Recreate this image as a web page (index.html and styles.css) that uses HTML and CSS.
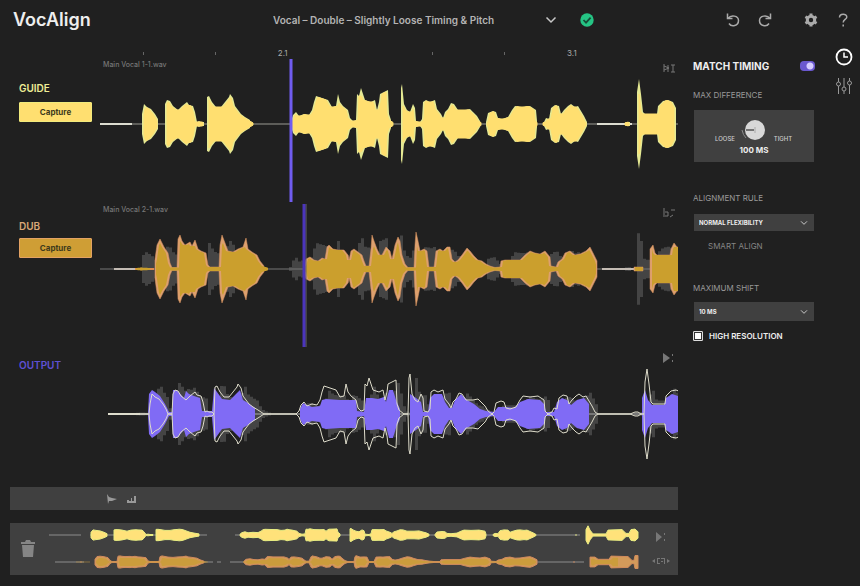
FILE: index.html
```html
<!DOCTYPE html>
<html lang="en">
<head>
<meta charset="utf-8">
<title>VocAlign</title>
<link rel="stylesheet" href="styles.css">
</head>
<body>
<header class="topbar">
  <h1 class="brand">VocAlign</h1>
  <div class="preset">
    <select class="preset-select" aria-label="Preset"><option>Vocal – Double – Slightly Loose Timing &amp; Pitch</option></select>
    <svg class="chevron" viewBox="0 0 12 8" width="12" height="8"><path d="M1.5 1.5 6 6l4.500-4.500"/></svg>
  </div>
  <svg class="status" viewBox="0 0 14 14" width="14" height="14"><circle cx="7" cy="7" r="6.700" fill="#25c484"/><path d="m3.500 7 2.500 2.600 4.600-5" fill="none" stroke="#174c38" stroke-width="1.800"/></svg>
  <nav class="tools">
    <button class="tool" aria-label="Undo"><svg viewBox="0 0 16 16"><path d="M2.500 1.500v5H7.500M3 6.500C6 2.500 13.500 3.500 13.500 8.500c0 5.500-7 7-9.500 3"/></svg></button>
    <button class="tool" aria-label="Redo"><svg viewBox="0 0 16 16"><path d="M13.500 1.500v5H8.500M13 6.500C10 2.500 2.500 3.500 2.500 8.500c0 5.500 7 7 9.500 3"/></svg></button>
    <button class="tool tool-gear" aria-label="Settings"><svg viewBox="0 0 16 16"><circle cx="8" cy="8" r="3.700" stroke-width="3"/><path stroke-width="3" d="M8 1.500v2M8 12.500v2M2.400 4.800l1.800 1M11.800 10.200l1.800 1M2.400 11.200l1.800-1M11.800 5.800l1.800-1"/></svg></button>
    <button class="tool" aria-label="Help"><svg viewBox="0 0 16 16"><path d="M4.500 5.500C4.500 1 11.800 1.200 11.800 5c0 2.500-3.600 2.500-3.600 5.500M8.200 12.500v2"/></svg></button>
  </nav>
</header>

<div class="app">
  <main class="workspace">
    <div class="ruler">
      <i class="tick"></i><i class="tick"></i><span>2.1</span><span></span><i class="tick"></i><i class="tick"></i><span>3.1</span>
    </div>

    <section class="track">
      <div class="track-head guide"><h2>GUIDE</h2><button class="capture">Capture</button></div>
      <div class="lane">
        <span class="clip">Main Vocal 1-1.wav</span>
        <svg class="wave" id="guide" viewBox="100 -66 578 145" preserveAspectRatio="none"></svg>
        <svg class="mark" viewBox="0 0 12 10"><path d="M1 1v8M1 3l5 2-5 2M5 2v7M8 2h4M10 2v7M8 9h4"/></svg>
      </div>
    </section>
    <section class="track">
      <div class="track-head dub"><h2>DUB</h2><button class="capture">Capture</button></div>
      <div class="lane">
        <span class="clip">Main Vocal 2-1.wav</span>
        <svg class="wave" id="dub" viewBox="100 -66 578 145" preserveAspectRatio="none"></svg>
        <svg class="mark" viewBox="0 0 12 10"><path d="M1 0v9M2 4h3v4H2M8 2h4M7 9l3-2"/></svg>
      </div>
    </section>
    <section class="track track-last">
      <div class="track-head output"><h2>OUTPUT</h2></div>
      <div class="lane">
        <svg class="wave" id="output" viewBox="100 -66 578 145" preserveAspectRatio="none"></svg>
        <svg class="mark" viewBox="0 0 12 10"><path class="solid" d="M0 0l7 5-7 5z"/><path d="M9.500 1v2M9.500 7v2"/></svg>
      </div>
    </section>

    <div class="strip">
      <svg viewBox="0 0 10 10" width="10" height="10"><path d="M0 0l2 3 3 1 5 1-5 2-3 0-1 3z"/></svg>
      <svg viewBox="0 0 10 10" width="10" height="10"><path d="M0 9V6h2v1h2V4h1v3h2V2h2v7z"/></svg>
    </div>

    <section class="overview">
      <button class="trash" aria-label="Delete"><svg viewBox="0 0 16 20" width="16" height="20"><path d="M1 3h4l1-2h4l1 2h4v2H1zM2 6h12l-1 12H3z"/></svg></button>
      <svg class="mini" id="mini" viewBox="49 0 591 52" preserveAspectRatio="none"></svg>
      <div class="mini-marks">
        <svg viewBox="0 0 18 10" width="18" height="10"><path d="M4 0l6 5-6 5zM12 1h1v2h-1zM12 7h1v2h-1z"/></svg>
        <svg viewBox="0 0 18 10" width="18" height="10"><path d="M3 3v4L0 5zM15 3v4l3-2zM5 2h3v1H6v4h2v1H5zM9 2h4v6h-1V3H9zM9 5h2v1H9z"/></svg>
      </div>
    </section>
  </main>

  <aside class="panel">
    <div class="panel-title"><label for="match">MATCH TIMING</label><input type="checkbox" class="toggle" id="match" checked></div>
    <label class="caption" for="knob">MAX DIFFERENCE</label>
    <div class="knob-box">
      <span class="end">LOOSE</span>
      <button class="knob" id="knob" aria-label="Max difference"><svg viewBox="0 0 28 22" width="28" height="22"><path d="M2 11q1 5 4 8" fill="none" stroke="#8a8a8a"/><circle cx="15" cy="11" r="10" fill="#d8d8d8"/><path d="M6 11h8" stroke="#555" stroke-width="1.500"/><path d="M15 8v6" stroke="#aaa"/></svg></button>
      <span class="end">TIGHT</span>
      <output class="value" for="knob">100 MS</output>
    </div>
    <label class="caption caption-rule" for="rule">ALIGNMENT RULE</label>
    <div class="drop drop-rule"><select id="rule"><option>NORMAL FLEXIBILITY</option></select><svg class="chevron" viewBox="0 0 12 8" width="8" height="6"><path d="M1.500 1.500 6 6l4.500-4.500"/></svg></div>
    <button class="smart">SMART ALIGN</button>
    <label class="caption caption-shift" for="shift">MAXIMUM SHIFT</label>
    <div class="drop drop-shift"><select id="shift"><option>10 MS</option></select><svg class="chevron" viewBox="0 0 12 8" width="8" height="6"><path d="M1.500 1.500 6 6l4.500-4.500"/></svg></div>
    <label class="check"><input type="checkbox" checked>HIGH RESOLUTION</label>
  </aside>

  <nav class="rail">
    <button class="rail-btn active" aria-label="Timing"><svg viewBox="0 0 18 18"><circle cx="9" cy="9" r="7.500" stroke-width="1.800"/><path d="M9 4.500V9h4" stroke-width="1.500"/></svg></button>
    <button class="rail-btn" aria-label="Pitch"><svg viewBox="0 0 18 18"><path d="M3.500 1v4M3.500 9v8M9 1v9M9 14v3M14.500 1v3M14.500 8v9"/><circle cx="3.500" cy="7" r="2"/><circle cx="9" cy="12" r="2"/><circle cx="14.500" cy="6" r="2"/></svg></button>
  </nav>
</div>
<script src="waves.js"></script>
</body>
</html>
```
FILE: styles.css
```css
* { box-sizing: border-box; }
body {
  margin: 0;
  min-height: 100vh;
  background: #202020;
  color: #eee;
  font-family: Inter, "Liberation Sans", sans-serif;
}
h1, h2 { margin: 0; }
button, select {
  font: inherit;
  color: inherit;
  border: 0;
  padding: 0;
  background: none;
  appearance: none;
}
svg { display: block; }

.topbar {
  display: flex;
  align-items: center;
  height: 40px;
  padding: 0 9px 0 13px;
}
.brand { font-size: 18px; font-weight: 600; line-height: 24px; width: 260px; }
.preset { display: flex; align-items: center; width: 284px; color: #b4b4b4; }
.preset-select { flex: 1; font-size: 10px; font-weight: 600; line-height: 16px; }
.chevron { flex: none; fill: none; stroke: #c8c8c8; stroke-width: 1.5; pointer-events: none; }
.status { margin-left: 23px; }
.tools { display: flex; align-items: center; gap: 16px; margin-left: auto; }
.tool svg { width: 16px; height: 16px; fill: none; stroke: #aaa; stroke-width: 1.5; }
.tool-gear { margin-left: 14px; }

.app { display: flex; align-items: flex-start; }
.workspace { flex: 1; min-width: 0; padding-left: 10px; }

.ruler {
  display: grid;
  grid-template-columns: repeat(7, 1fr);
  justify-items: center;
  align-items: center;
  height: 18px;
  padding: 7px 65px 0 97px;
  font-size: 8px;
  line-height: 12px;
  color: #aaa;
}
.ruler span { padding-right: 10px; }
.tick { width: 1px; height: 3px; background: #666; }

.track { display: flex; height: 145px; }
.track-last { height: 139px; }
.track-head { flex: none; width: 90px; padding: 23px 8px 0 9px; }
.track-head.dub { padding-top: 16px; }
.track-head.output { padding-top: 10px; }
.track-head h2 { font-size: 10px; line-height: 14px; font-weight: 600; }
.guide h2 { color: #eeee96; }
.dub h2 { color: #d9a777; }
.output h2 { color: #5f50d4; }
.capture {
  display: block;
  width: 100%;
  height: 20px;
  margin-top: 7px;
  border-radius: 1px;
  font-size: 8px;
  font-weight: 700;
  color: #403a1c;
  background: #ffdf70;
  border: 1px solid #f1ea7c;
}
.dub .capture { margin-top: 5px; background: #cf9e35; border-color: #e3a263; }
.lane { position: relative; flex: 1; min-width: 0; }
.wave { width: 100%; height: 145px; }
.clip { position: absolute; left: 3px; top: 2px; font-size: 7px; line-height: 10px; font-weight: 500; color: #777; }
.mark { position: absolute; right: 3px; top: 5px; width: 12px; height: 10px; fill: none; stroke: #777; }
.mark .solid { fill: #777; stroke: none; }

.strip {
  display: flex;
  align-items: center;
  gap: 10px;
  height: 23px;
  padding-left: 97px;
  background: #404040;
  fill: #999;
}
.overview {
  display: flex;
  align-items: center;
  height: 52px;
  margin: 13px 0 11px;
  padding: 0 8px 0 10px;
  background: #404040;
}
.trash { width: 29px; fill: #858585; }
.mini { flex: 1; min-width: 0; height: 52px; }
.mini-marks { display: grid; gap: 14px; margin-left: 12px; fill: #777; }

.panel { width: 137px; flex: none; padding: 18px 0 0 15px; }
.panel-title {
  display: flex;
  align-items: center;
  justify-content: space-between;
  height: 16px;
  font-size: 10px;
  font-weight: 700;
}
.toggle {
  appearance: none;
  width: 15px;
  height: 10px;
  margin: 0;
  border-radius: 4px;
  background: radial-gradient(circle at 10px 5px, #d5ccff 3px, #6a58cf 4px);
}
.caption { display: block; margin-top: 15px; font-size: 8px; line-height: 12px; color: #999; }
.knob-box {
  display: grid;
  grid-template-columns: 1fr auto 1fr;
  align-items: end;
  justify-items: center;
  column-gap: 4px;
  height: 52px;
  margin: 9px 1px 0;
  padding: 9px 20px 7px;
  background: #404040;
}
.knob { align-self: start; }
.end { font-size: 6px; line-height: 8px; font-weight: 500; color: #ccc; }
.value { grid-column: 1 / -1; font-size: 8px; line-height: 10px; font-weight: 700; }
.caption-rule { margin-top: 30px; }
.drop {
  display: flex;
  align-items: center;
  margin: 10px 1px 0;
  padding: 0 6px 0 5px;
  background: #404040;
}
.drop select { flex: 1; min-width: 0; font-size: 6px; font-weight: 700; }
.drop-rule { height: 17px; }
.drop-shift { height: 19px; margin-top: 8px; }
.smart { display: block; margin: 9px 0 0 15px; font-size: 8px; line-height: 12px; color: #858585; }
.caption-shift { margin-top: 30px; }
.check { display: flex; align-items: center; gap: 6px; margin-top: 9px; font-size: 8px; line-height: 12px; font-weight: 600; }
.check input {
  appearance: none;
  width: 10px;
  height: 10px;
  margin: 0;
  border: 1px solid #ddd;
  border-radius: 1px;
  background: #fff;
  box-shadow: inset 0 0 0 1px #333;
}

.rail { width: 45px; flex: none; display: grid; gap: 11px; justify-items: center; padding: 8px 0 0 13px; }
.rail-btn svg { width: 18px; height: 18px; fill: none; stroke: #999; }
.rail-btn.active svg { stroke: #fff; }
```
FILE: waves.js
```js
// Amplitude envelopes: position and half-height pairs.
const guide = [100,1,132,1,133,.5,141,.5,142,10,144,20,147,17,151,15,155,10,158,5,160,1,164,1,165,20,167,24,170,23,173,18,178,14,182,18,187,22,189,19,193,18,195,12,197,2,199,3,201,2,204,2,206,1,207,27,209,28,212,22,216,17,221,17,225,22,229,27,230,30,233,26,235,18,238,14,241,10,245,7,250,4,256,.5,288,.5,291,3,293,9,296,12,299,8,304,10,309,9,312,14,314,22,316,28,322,26,328,24,332,17,336,18,338,30,340,22,343,18,348,14,350,6,353,3,356,4,357,30,359,28,361,36,363,30,365,24,371,22,375,24,377,14,379,22,380,30,384,32,388,34,389,10,391,4,396,1,400,1,401,36,402,40,404,20,407,14,410,12,413,20,415,16,416,3,420,2,422,5,423,22,426,24,430,22,435,24,437,15,441,10,443,6,445,12,448,15,451,21,454,20,458,14,465,14,470,15,473,12,477,8,480,3,484,1,486,2,488,11,493,13,496,12,498,6,502,5,508,7,512,14,515,18,522,17,530,18,536,14,537,3,540,1,544,2,546,6,549,5,551,16,555,19,559,18,561,10,564,14,568,18,571,20,575,17,578,18,581,13,584,8,587,2,590,.5,597,1,622,1,627,2,630,2,633,.5,636,.5,637,32,639,45,641,30,643,12,645,10,657,10,658,18,663,23,668,24,673,22,676,16,677,1];
const dub = [114,1,133,1,141,1.5,153,1,155,10,157,24,160,30,164,22,168,16,170,6,172,1.5,177,1.5,178,30,180,34,182,28,185,24,190,27,192,23,195,29,198,20,201,18,206,16,208,4,210,2,219,2,220,24,222,34,225,26,228,18,233,17,238,20,243,22,246,31,248,20,252,17,257,14,260,8,264,3,271,1,276,.5,300,.5,304,3,306,10,310,12,314,9,318,8,322,11,325,10,327,22,329,24,333,20,338,19,344,19,348,14,349,9,351,18,354,20,358,17,362,14,364,8,366,3,369,3,371,20,372,34,374,28,377,20,380,14,382,14,386,22,390,18,392,10,395,24,398,32,400,28,402,14,405,5,408,1.5,414,1.5,415,24,416,37,418,28,420,18,424,20,427,18,429,2,434,2,436,18,440,20,443,18,447,22,450,22,452,10,455,7,458,9,462,14,467,21,470,18,474,13,478,9,482,8,486,5,490,3,495,1.5,500,2,501,8,505,9,512,9,520,9,525,14,530,18,535,16,540,15,545,18,550,12,551,3,556,2,558,7,562,10,565,16,570,18,575,14,580,15,586,18,590,22,593,16,597,8,599,1,632,1,634,2,643,2,646,1,649,1,650,20,653,24,655,16,657,14,670,14,671,20,674,26,677,22,678,22];
const aligned = [147,.5,148,2,149,20,152,24,155,22,160,18,165,10,169,2,172,2,173,24,177,24,184,16,186,23,189,20,194,18,200,16,202,3,212,3,214,26,217,22,222,15,230,14,236,20,240,24,243,14,248,11,255,6,262,1,297,1,300,5,303,11,307,9,312,7,320,8,322,14,326,15,340,14,356,14,357,3,364,2,366,16,372,16,378,15,384,17,386,12,389,24,393,24,396,14,400,5,404,1,408,1,410,20,416,16,421,12,423,2,428,2,430,16,434,20,442,20,445,12,449,6,452,6,455,14,461,20,467,14,474,10,480,5,486,3,494,2,498,7,505,7,514,6,520,12,528,15,540,14,544,10,546,2,554,2,557,12,562,16,567,14,571,9,577,14,584,16,589,10,594,.5,640,.5,642,16,645,24,648,14,652,9,664,9,666,16,672,20,678,18];

const pairs = a => a.reduce((p, v, i) => (i % 2 ? p[p.length - 1].push(v) : p.push([v]), p), []);

// Mirrored outline. Levels of 1 and below count as silence.
function outline(points, dx = 0, cy = 0, gain = 1) {
  const edge = sign => points.map(([x, a]) => [x + dx, cy + sign * (a > 1 ? a * gain : 0)]);
  return "M" + edge(-1).concat(edge(1).reverse()).map(p => p.map(n => n.toFixed(1)).join(" ")).join("L") + "Z";
}

// One closed outline for each stretch of sound, nothing for the silence between.
function shape(points, dx = 0, cy = 0, gain = 1) {
  const runs = [];
  let run = [];
  points.forEach(p => {
    if (p[1] > 1) run.push(p);
    else { if (run.length) runs.push(run); run = []; }
  });
  if (run.length) runs.push(run);
  return runs.map(r => outline(r, dx, cy, gain)).join("");
}

function sample(points, x) {
  const i = points.findIndex(p => p[0] >= x);
  if (i < 1) return 0;
  const [x0, a0] = points[i - 1], [x1, a1] = points[i];
  return a0 + (a1 - a0) * (x - x0) / (x1 - x0);
}

// The steady body of a clip: lowest level within a few pixels of each point.
function body(points) {
  const out = [];
  for (let x = points[0][0]; x <= 678; x++) {
    out.push([x, Math.min(...[-2, -1, 0, 1, 2].map(d => sample(points, Math.min(x + d, 678))))]);
  }
  return out;
}

// Coarse block-shaped version of an envelope.
function blocks(points) {
  const out = [];
  for (let x = 100; x < 678; x += 3) {
    const a = sample(points, x + 1);
    out.push([x, a], [x + 3, a]);
  }
  return out;
}

const path = (d, fill, stroke = "none", width = 1) =>
  `<path d="${d}" fill="${fill}" stroke="${stroke}" stroke-width="${width}" stroke-linejoin="round"/>`;
const line = (d, color, width = 1) => path(d, "none", color, width);
const head = (x, color) => line(`M${x} -65V78`, color, 3);
const g = pairs(guide), d = pairs(dub), o = pairs(aligned);
const put = (id, html) => { document.getElementById(id).innerHTML = html; };

put("guide", line("M100 0H678", "#9a9a92") + line("M100 0H132M597 0H632", "#dcdcd0", 2) +
  path(shape(g), "#e5e993") + path(shape(body(g)), "#ffdf70", "#ffdf70") + head(291, "#705cf0"));
put("dub", path(shape(blocks(g), 0, 0, .93), "#444") +
  line("M100 0H678", "#777") + line("M114 0H135M602 0H634", "#c4bcb4", 2) + line("M135 0H154", "#e08a50", 2) +
  path(shape(d), "#dda06f", "#d9925f", .5) + path(shape(body(d)), "#cb9f2d") +
  line("M306 -65V78", "#666") + head(304, "#4b35bd"));
put("output", path(shape(blocks(d), 0, 0, .97), "#444") + line("M108 0H678", "#aaa") +
  line("M108 0H140", "#deded2", 2) + path(shape(o), "#806bf5") +
  line(outline(g, 8), "#dedccb"));

const flat = pts => pts.map(([x, a]) => [x, a > 8 ? Math.min(a, 14 + a / 4) : a]);
const tailG = [[630, .5], [636, 1], [637, 20], [639, 34], [641, 18], [644, 4], [657, 4], [659, 18], [673, 20], [677, 6], [680, 6], [682, 20], [686, 22], [689, 12], [690, 1]];
const tailD = [[640, .5], [648, 1], [650, 18], [655, 18], [658, 10], [669, 10], [671, 22], [688, 20], [692, 6], [694, 6], [695, 24], [698, 24]];
const mg = flat(g.filter(p => p[0] < 630)).concat(tailG);
const md = flat(d.filter(p => p[0] < 640)).concat(tailD);
put("mini",
  line("M49 12H81M90 12H207M235 12H580", "#8c8c8c") + line("M55 39H84M95 39H213M217 39H221M230 39H584", "#8c8c8c") +
  path(shape(mg, -51, 12, .27), "#ffe27a", "#e9ee82") +
  path(shape(md, -60, 39, .27), "#d39a5a", "#d18b5c") +
  path(shape(body(md), -60, 39, .2), "#cb9c3c"));
```
